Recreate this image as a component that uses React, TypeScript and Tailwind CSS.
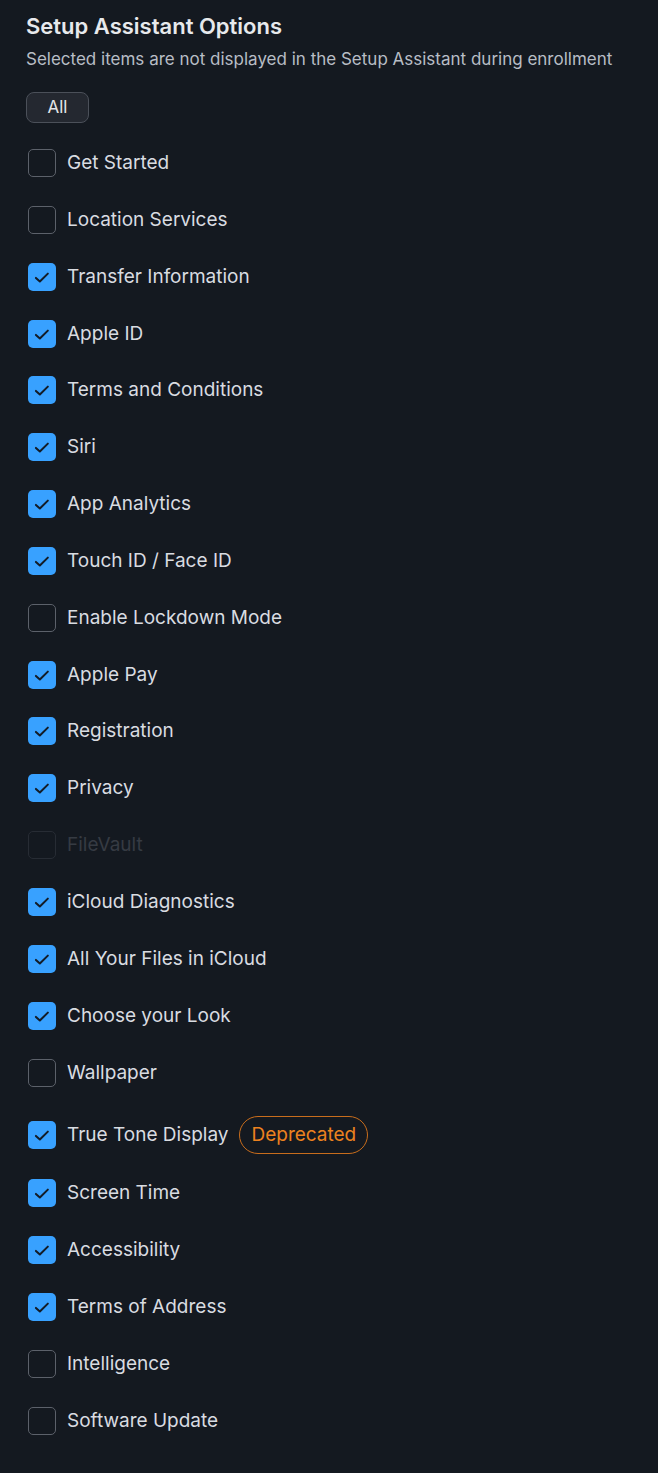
import React from "react";

type Item = { label: string; checked: boolean; disabled?: boolean; deprecated?: boolean };

const items: Item[] = [
  { label: "Get Started", checked: false },
  { label: "Location Services", checked: false },
  { label: "Transfer Information", checked: true },
  { label: "Apple ID", checked: true },
  { label: "Terms and Conditions", checked: true },
  { label: "Siri", checked: true },
  { label: "App Analytics", checked: true },
  { label: "Touch ID / Face ID", checked: true },
  { label: "Enable Lockdown Mode", checked: false },
  { label: "Apple Pay", checked: true },
  { label: "Registration", checked: true },
  { label: "Privacy", checked: true },
  { label: "FileVault", checked: false, disabled: true },
  { label: "iCloud Diagnostics", checked: true },
  { label: "All Your Files in iCloud", checked: true },
  { label: "Choose your Look", checked: true },
  { label: "Wallpaper", checked: false },
  { label: "True Tone Display", checked: true, deprecated: true },
  { label: "Screen Time", checked: true },
  { label: "Accessibility", checked: true },
  { label: "Terms of Address", checked: true },
  { label: "Intelligence", checked: false },
  { label: "Software Update", checked: false },
];

function Box({ checked, disabled }: { checked: boolean; disabled?: boolean }) {
  if (checked) {
    return (
      <span className="flex h-7 w-7 shrink-0 items-center justify-center rounded-[5px] bg-[#38a1ff]">
        <svg width="18" height="18" viewBox="0 0 16 16" fill="none">
          <path d="M2.6 8.8 L6.1 12 L13.2 5" stroke="#131c27" strokeWidth="1.8" strokeLinecap="round" strokeLinejoin="round" />
        </svg>
      </span>
    );
  }
  return (
    <span
      className={
        disabled
          ? "h-7 w-7 shrink-0 rounded-[5px] border border-[#272c34]"
          : "h-7 w-7 shrink-0 rounded-[5px] border border-[#5c616a]"
      }
    />
  );
}

export default function App() {
  return (
    <div
      className="min-h-[1473px] w-full bg-[#141920] px-[26px] pt-[11px]"
      style={{ fontFamily: "Inter, 'Noto Sans', sans-serif" }}
    >
      <h1 className="text-[22px] leading-[30px] font-semibold text-[#e7e9ec]">Setup Assistant Options</h1>
      <p className="mt-[6px] text-[17px] leading-6 text-[#b8bdc5]">
        Selected items are not displayed in the Setup Assistant during enrollment
      </p>
      <button className="mt-[21px] h-[31px] w-[63px] rounded-[8px] border border-[#4b5059] bg-[#242830] text-[17px] text-[#e3e5e8]">
        All
      </button>
      <div className="mt-[26px] flex flex-col gap-[28.85px] pl-[2px]">
        {items.map((it) => (
          <label
            key={it.label}
            className={it.deprecated ? "mt-[6px] mb-[1px] flex items-center gap-[11px]" : "flex items-center gap-[11px]"}
          >
            <Box checked={it.checked} disabled={it.disabled} />
            <span
              className={
                it.disabled
                  ? "text-[19px] leading-7 text-[#363b43]"
                  : "text-[19px] leading-7 text-[#d9dce1]"
              }
            >
              {it.label}
            </span>
            {it.deprecated && (
              <span className="-my-[5px] flex h-[38px] items-center rounded-full border border-[#c86d1c] px-[11px] text-[19px] text-[#ec821f]">
                Deprecated
              </span>
            )}
          </label>
        ))}
      </div>
    </div>
  );
}
